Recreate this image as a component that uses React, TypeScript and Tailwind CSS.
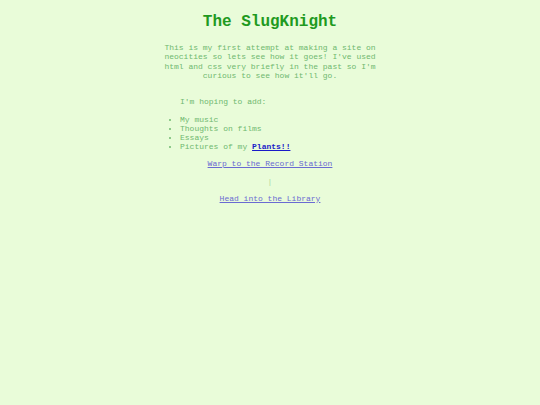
export default function App() {
  return (
    <main className="min-h-[405px] bg-[#e9fcd9] font-['Liberation_Mono',monospace] text-[#6fb86f]">
      <div className="mx-auto w-[212px] pt-[13px]">
        <h1 className="text-center text-[16px] font-bold leading-[18px] text-[#1f9a1f]">The SlugKnight</h1>

        <p className="mt-[12px] text-center text-[8px] leading-[9.4px]">
          This is my first attempt at making a site on neocities so lets see how it goes! I've used html and css very
          briefly in the past so I'm curious to see how it'll go.
        </p>

        <p className="mt-[16px] pl-4 text-[8px] leading-[9px]">I'm hoping to add:</p>

        <ul className="mt-[9px] list-disc pl-4 text-[8px] leading-[9px] marker:text-[7px]">
          <li>My music</li>
          <li>Thoughts on films</li>
          <li>Essays</li>
          <li>
            Pictures of my{' '}
            <a href="#" className="font-bold text-[#1a1ac8] underline">
              Plants!!
            </a>
          </li>
        </ul>

        <div className="mt-[8px] text-center text-[8px] leading-[9px]">
          <a href="#" className="text-[#6a6ad2] underline">
            Warp to the Record Station
          </a>
          <p className="mt-[9px] text-[#a9d9a0]">|</p>
          <a href="#" className="mt-[8px] inline-block text-[#6a6ad2] underline">
            Head into the Library
          </a>
        </div>
      </div>
    </main>
  )
}
